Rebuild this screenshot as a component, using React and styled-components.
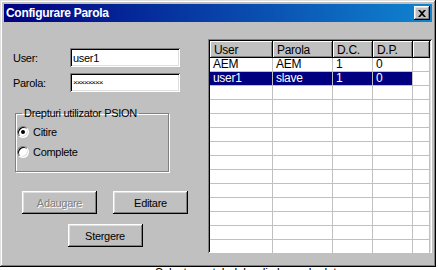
import React from 'react';
import styled, { createGlobalStyle, css } from 'styled-components';

const face = '#c0c0c0';
const shadow = '#808080';
const light = '#dfdfdf';
const navy = '#000080';

const GlobalStyle = createGlobalStyle`
  html, body { margin: 0; padding: 0; background: #fff; }
  body {
    font-family: "Liberation Sans", Arial, sans-serif;
    font-size: 11px;
    letter-spacing: -0.3px;
    color: #000;
  }
  * { box-sizing: border-box; }
`;

const raised = css`
  box-shadow: inset -1px -1px #000, inset 1px 1px #fff,
    inset -2px -2px ${shadow}, inset 2px 2px ${light};
`;

const sunken = css`
  box-shadow: inset 1px 1px ${shadow}, inset -1px -1px #fff,
    inset 2px 2px #000, inset -2px -2px ${light};
`;

const Window = styled.div`
  width: 436px;
  height: 267px;
  padding: 4px;
  background: ${face};
  display: flex;
  flex-direction: column;
  box-shadow: inset -1px -1px #000, inset 1px 1px ${light},
    inset -2px -2px ${shadow}, inset 2px 2px #fff;
`;

const TitleBar = styled.div`
  height: 18px;
  flex: none;
  display: flex;
  align-items: center;
  justify-content: space-between;
  padding: 0 2px;
  background: linear-gradient(to right, ${navy}, #1084d0);
  color: #fff;
  font-weight: bold;
  font-size: 12px;
`;

const CloseButton = styled.div`
  width: 16px;
  height: 14px;
  background: ${face};
  display: flex;
  align-items: center;
  justify-content: center;
  ${raised};
`;

const Body = styled.div`
  flex: 1;
  display: flex;
`;

const LeftPane = styled.div`
  width: 204px;
  padding: 26px 0 0 9px;
  display: flex;
  flex-direction: column;
`;

const FieldRow = styled.div`
  display: flex;
  align-items: center;
  height: 19px;
  & + & { margin-top: 6px; }
`;

const Label = styled.span`
  width: 57px;
`;

const TextBox = styled.div`
  width: 110px;
  height: 19px;
  background: #fff;
  padding-left: 3px;
  display: flex;
  align-items: center;
  font-size: ${({ $small }) => ($small ? '8px' : '11px')};
  letter-spacing: ${({ $small }) => ($small ? '-1px' : '-0.3px')};
  ${sunken};
`;

const GroupBox = styled.fieldset`
  margin: 14px 0 0 2px;
  width: 154px;
  height: 66px;
  padding: 2px 0 0 1px;
  border: 1px solid ${shadow};
  box-shadow: inset 1px 1px #fff, 1px 1px #fff;
`;

const Legend = styled.legend`
  margin-left: 5px;
  padding: 0 2px;
  line-height: 14px;
`;

const RadioRow = styled.label`
  display: flex;
  align-items: center;
  height: 20px;
  gap: 4px;
`;

const RadioDot = styled.span`
  width: 12px;
  height: 12px;
  border-radius: 50%;
  background: #fff;
  border: 1px solid;
  border-color: ${shadow} #fff #fff ${shadow};
  box-shadow: inset 1px 1px #000, inset -1px -1px ${light};
  display: flex;
  align-items: center;
  justify-content: center;
  &::after {
    content: '';
    width: 4px;
    height: 4px;
    border-radius: 50%;
    background: ${({ $checked }) => ($checked ? '#000' : 'transparent')};
  }
`;

const ButtonArea = styled.div`
  width: 166px;
  margin: 19px 0 0 9px;
  display: flex;
  flex-direction: column;
  align-items: center;
  gap: 10px;
`;

const ButtonRow = styled.div`
  width: 100%;
  display: flex;
  justify-content: space-between;
`;

const Button = styled.div`
  width: 75px;
  height: 23px;
  background: ${face};
  display: flex;
  align-items: center;
  justify-content: center;
  color: ${({ $disabled }) => ($disabled ? shadow : '#000')};
  text-shadow: ${({ $disabled }) => ($disabled ? '1px 1px #fff' : 'none')};
  ${raised};
`;

const ListView = styled.div`
  margin-top: 17px;
  width: 224px;
  height: 214px;
  padding: 2px;
  background: #fff;
  overflow: hidden;
  ${sunken};
`;

const columns = '63px 60px 40px 40px 1fr';

const HeaderRow = styled.div`
  display: grid;
  grid-template-columns: ${columns};
  height: 17px;
`;

const HeaderCell = styled.div`
  background: ${face};
  padding-left: 4px;
  display: flex;
  align-items: center;
  font-size: 12px;
  box-shadow: inset -1px -1px #000, inset 1px 1px #fff, inset -2px -2px ${shadow};
`;

const Row = styled.div`
  display: grid;
  grid-template-columns: ${columns};
  height: 14px;
`;

const Cell = styled.div`
  padding-left: 3px;
  line-height: 13px;
  border-right: 1px solid ${face};
  border-bottom: 1px solid ${face};
  background: ${({ $selected }) => ($selected ? navy : '#fff')};
  color: ${({ $selected }) => ($selected ? '#fff' : '#000')};
  font-size: 12px;
`;

const Strip = styled.div`
  height: 3px;
  overflow: hidden;
  padding-left: 155px;
  font-size: 12px;
  line-height: 12px;
`;

const headers = ['User', 'Parola', 'D.C.', 'D.P.', ''];
const users = [
  ['AEM', 'AEM', '1', '0'],
  ['user1', 'slave', '1', '0'],
];

export default function App() {
  const rows = Array.from({ length: 14 }, (_, i) => users[i] || ['', '', '', '']);
  return (
    <>
      <GlobalStyle />
      <Window>
        <TitleBar>
          <span>Configurare Parola</span>
          <CloseButton>
            <svg width="8" height="7" viewBox="0 0 8 7">
              <path d="M0 0h2l2 2 2-2h2L5 3.5 8 7H6L4 5 2 7H0l3-3.5z" fill="#000" />
            </svg>
          </CloseButton>
        </TitleBar>
        <Body>
          <LeftPane>
            <FieldRow>
              <Label>User:</Label>
              <TextBox>user1</TextBox>
            </FieldRow>
            <FieldRow>
              <Label>Parola:</Label>
              <TextBox $small>××××××××</TextBox>
            </FieldRow>
            <GroupBox>
              <Legend>Drepturi utilizator PSION</Legend>
              <RadioRow><RadioDot $checked />Citire</RadioRow>
              <RadioRow><RadioDot />Complete</RadioRow>
            </GroupBox>
            <ButtonArea>
              <ButtonRow>
                <Button $disabled>Adaugare</Button>
                <Button>Editare</Button>
              </ButtonRow>
              <Button>Stergere</Button>
            </ButtonArea>
          </LeftPane>
          <ListView>
            <HeaderRow>
              {headers.map((h, i) => <HeaderCell key={i}>{h}</HeaderCell>)}
            </HeaderRow>
            {rows.map((r, i) => (
              <Row key={i}>
                {r.map((c, j) => <Cell key={j} $selected={i === 1}>{c}</Cell>)}
                <Cell />
              </Row>
            ))}
          </ListView>
        </Body>
      </Window>
      <Strip>Selectarea tabelelor din baza de date</Strip>
    </>
  );
}
